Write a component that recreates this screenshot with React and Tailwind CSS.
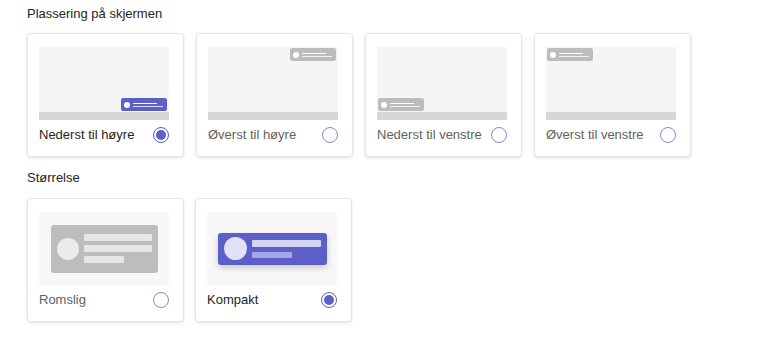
import React from 'react'

const Radio = ({ checked }) => (
  <span
    className={`flex h-4 w-4 shrink-0 items-center justify-center rounded-full border ${
      checked ? 'border-[#5b5fc7]' : 'border-[#8587c9]'
    } bg-white`}
  >
    {checked && <span className="h-[10px] w-[10px] rounded-full bg-[#5b5fc7]" />}
  </span>
)

const MiniToast = ({ active, className }) => (
  <div
    className={`absolute flex h-[13px] w-[46px] items-center rounded-[2px] pl-[3px] ${
      active ? 'bg-[#5b5fc7]' : 'bg-[#bdbdbd]'
    } ${className}`}
  >
    <span className="h-[6px] w-[6px] rounded-full bg-white" />
    <div className="ml-[3px] flex flex-col gap-[2px]">
      <span className="h-px w-[24px] bg-white" />
      <span className="h-px w-[30px] bg-white/80" />
    </div>
  </div>
)

const positions = [
  { label: 'Nederst til høyre', pos: 'right-[2px] bottom-[9px]', checked: true },
  { label: 'Øverst til høyre', pos: 'right-[2px] top-[1px]', checked: false },
  { label: 'Nederst til venstre', pos: 'left-[1px] bottom-[9px]', checked: false },
  { label: 'Øverst til venstre', pos: 'left-[1px] top-[1px]', checked: false },
]

const Card = ({ label, checked, children }) => (
  <div className="flex w-[157px] flex-col rounded-[4px] border border-[#e6e6e6] bg-white pl-[11px] pr-[14px] pt-[13px] pb-[13px] shadow-[0_1px_3px_rgba(0,0,0,0.12)]">
    {children}
    <div className="mt-[7px] flex h-4 items-center justify-between">
      <span className={`text-[13px] leading-4 ${checked ? 'text-[#242424]' : 'text-[#616161]'}`}>
        {label}
      </span>
      <Radio checked={checked} />
    </div>
  </div>
)

export default function App() {
  return (
    <div
      className="min-h-[339px] w-[760px] bg-white pl-[27px] pt-[5px]"
      style={{ fontFamily: '"Liberation Sans", Arial, sans-serif' }}
    >
      <h2 className="text-[13px] leading-[18px] text-[#242424]">Plassering på skjermen</h2>
      <div className="mt-[10px] flex gap-[12px]">
        {positions.map((p) => (
          <Card key={p.label} label={p.label} checked={p.checked}>
            <div className="relative h-[73px] w-[130px] bg-[#f5f5f5]">
              <div className="absolute bottom-0 left-0 h-2 w-full bg-[#d6d6d6]" />
              <MiniToast active={p.checked} className={p.pos} />
            </div>
          </Card>
        ))}
      </div>

      <h2 className="mt-[12px] text-[13px] leading-[18px] text-[#242424]">Størrelse</h2>
      <div className="mt-[11px] flex gap-[11px]">
        <Card label="Romslig" checked={false}>
          <div className="flex h-[73px] w-[130px] items-center justify-center bg-[#f7f7f7]">
            <div className="flex h-[48px] w-[107px] items-center rounded-[3px] bg-[#bdbdbd] pl-[6px] pr-[6px]">
              <span className="h-[22px] w-[22px] shrink-0 rounded-full bg-[#ebebeb]" />
              <div className="ml-[5px] flex flex-1 flex-col gap-[4px]">
                <span className="h-[7px] w-full rounded-[1px] bg-[#e6e6e6]" />
                <span className="h-[7px] w-full rounded-[1px] bg-[#e6e6e6]" />
                <span className="h-[7px] w-[40px] rounded-[1px] bg-[#e6e6e6]" />
              </div>
            </div>
          </div>
        </Card>
        <Card label="Kompakt" checked={true}>
          <div className="flex h-[73px] w-[130px] items-center justify-center bg-[#f7f7f7]">
            <div className="flex h-[32px] w-[109px] items-center rounded-[3px] bg-[#5b5fc7] pl-[6px] pr-[6px] shadow-[0_3px_6px_rgba(0,0,0,0.18)]">
              <span className="h-[23px] w-[23px] shrink-0 rounded-full bg-[#e2e2f6]" />
              <div className="ml-[5px] flex flex-1 flex-col gap-[5px]">
                <span className="h-[7px] w-full rounded-[1px] bg-[#d4d5f4]" />
                <span className="h-[6px] w-[40px] rounded-[1px] bg-[#a3a6e6]" />
              </div>
            </div>
          </div>
        </Card>
      </div>
    </div>
  )
}
